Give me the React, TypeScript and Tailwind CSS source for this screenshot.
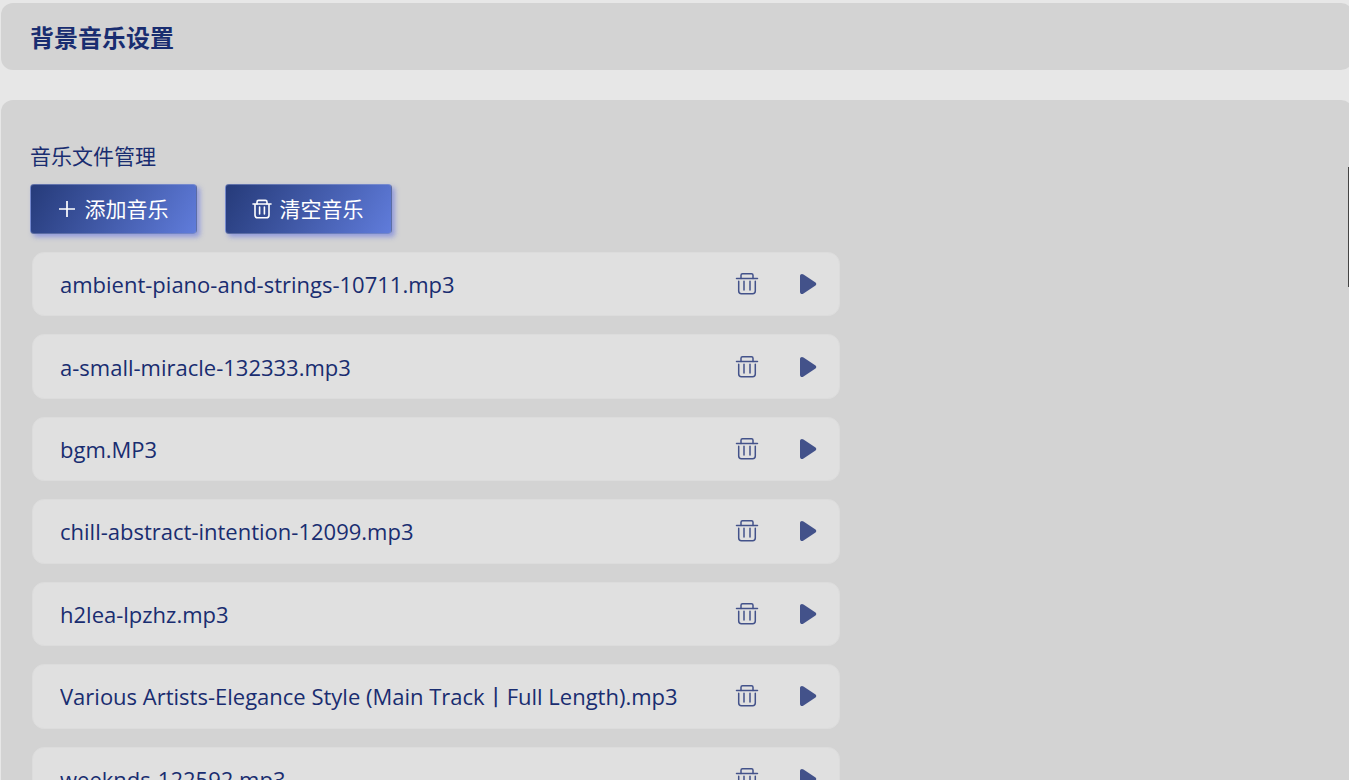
import type { ReactNode } from 'react';

const tracks = [
  'ambient-piano-and-strings-10711.mp3',
  'a-small-miracle-132333.mp3',
  'bgm.MP3',
  'chill-abstract-intention-12099.mp3',
  'h2lea-lpzhz.mp3',
  'Various Artists-Elegance Style (Main Track丨Full Length).mp3',
  'weeknds-122592.mp3',
];

function PlusIcon() {
  return (
    <svg width="20" height="20" viewBox="0 0 20 20" fill="none" stroke="currentColor" strokeWidth="1.7" aria-hidden="true">
      <path d="M10 2v16M2 10h16" />
    </svg>
  );
}

function ClearIcon() {
  return (
    <svg width="20" height="20" viewBox="0 0 20 20" fill="none" stroke="currentColor" strokeWidth="1.6" strokeLinecap="round" aria-hidden="true">
      <path d="M1 5h18" />
      <path d="M5 5V3a1.6 1.6 0 0 1 1.600-1.6h6.8A1.6 1.6 0 0 1 15 3v2" />
      <path d="M3 5.500v10.700a2.6 2.6 0 0 0 2.6 2.6h8.8a2.6 2.6 0 0 0 2.6-2.6V5.5" />
      <path d="M7.600 8v7M12.400 8v7" />
    </svg>
  );
}

function TrashIcon() {
  return (
    <svg width="24" height="24" viewBox="0 0 24 24" fill="none" stroke="currentColor" strokeWidth="1.5" strokeLinecap="round" aria-hidden="true">
      <path d="M1.500 6.500h21" />
      <path d="M6 6.500V3.200A1.500 1.500 0 0 1 7.500 1.700h9A1.500 1.500 0 0 1 18 3.200v3.300" />
      <path d="M3.700 9.300v9.700a2.700 2.700 0 0 0 2.700 2.700h11.200a2.700 2.700 0 0 0 2.700-2.700v-9.700" />
      <path d="M9 9.300v8.700M15 9.300v8.700" />
    </svg>
  );
}

function PlayIcon() {
  return (
    <svg width="18" height="22" viewBox="0 0 18 22" fill="currentColor" aria-hidden="true">
      <path d="M1 3v16c0 1.900 2 2.600 3.500 1.500l12-8.100c1-.7 1-2.100 0-2.800l-12-8.100C3 .4 1 1.100 1 3z" />
    </svg>
  );
}

function ActionButton({ icon, children }: { icon: ReactNode; children: ReactNode }) {
  return (
    <button
      type="button"
      className="flex h-[50px] w-[167px] items-center justify-center gap-2 rounded border border-[#8f9bc8]/50 bg-linear-120 from-[#263b7a] to-[#607cdb] pr-0.5 text-[21px] leading-7 text-white shadow-[3px_3px_5px_rgba(110,125,225,0.65)]"
    >
      {icon}
      <span>{children}</span>
    </button>
  );
}

function TrackRow({ name }: { name: string }) {
  return (
    <li className="flex items-center rounded-xl border border-[#dcdcdc] bg-[#e0e0e0] pr-[22px] pl-[27px]">
      <span className="min-w-0 flex-1 truncate text-[22px] leading-8">{name}</span>
      <div className="flex items-center gap-10 text-[#43528a]">
        <button type="button" aria-label={`删除 ${name}`}>
          <TrashIcon />
        </button>
        <button type="button" aria-label={`播放 ${name}`}>
          <PlayIcon />
        </button>
      </div>
    </li>
  );
}

export default function App() {
  return (
    <main className="relative h-screen overflow-hidden bg-[#e7e7e7] font-['Open_Sans','Noto_Sans_CJK_SC',sans-serif] text-[#192d70]">
      <div className="-mr-1 ml-px flex flex-col gap-[30px] pt-[3px]">
        <header className="rounded-xl bg-[#d3d3d3] px-[29px] pt-[18px] pb-4">
          <h1 className="text-2xl leading-[33px] font-bold">背景音乐设置</h1>
        </header>
        <section className="rounded-xl bg-[#d3d3d3] px-[29px] pt-10 pb-10">
          <h2 className="text-[21px] leading-8">音乐文件管理</h2>
          <div className="mt-3 flex gap-7">
            <ActionButton icon={<PlusIcon />}>添加音乐</ActionButton>
            <ActionButton icon={<ClearIcon />}>清空音乐</ActionButton>
          </div>
          <ul className="mt-[18px] ml-0.5 grid min-h-[559px] max-w-[808px] auto-rows-fr gap-[18px]">
            {tracks.map((name) => (
              <TrackRow key={name} name={name} />
            ))}
          </ul>
        </section>
      </div>
      <div className="absolute top-[167px] right-0 h-[120px] w-px bg-[#444444]" />
    </main>
  );
}
